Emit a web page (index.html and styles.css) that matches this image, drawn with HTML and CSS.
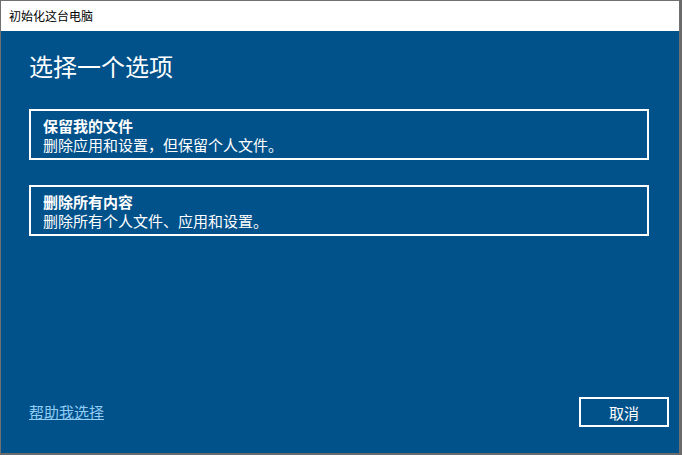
FILE: index.html
```html
<!DOCTYPE html>
<html lang="zh-CN">
<head>
<meta charset="utf-8">
<title>初始化这台电脑</title>
<link rel="stylesheet" href="styles.css">
</head>
<body>
<div class="window">
  <div class="titlebar">初始化这台电脑</div>
  <div class="content">
    <div class="main">
      <h1 class="heading">选择一个选项</h1>
      <div class="option">
        <div class="option-title">保留我的文件</div>
        <div class="option-desc">删除应用和设置，但保留个人文件。</div>
      </div>
      <div class="option option-second">
        <div class="option-title">删除所有内容</div>
        <div class="option-desc">删除所有个人文件、应用和设置。</div>
      </div>
    </div>
    <div class="footer">
      <a class="help" href="#">帮助我选择</a>
      <button class="cancel" type="button">取消</button>
    </div>
  </div>
</div>
</body>
</html>
```

FILE: styles.css
```css
html, body {
  margin: 0;
  padding: 0;
}
body {
  width: 682px;
  height: 455px;
  background: #6a6a6a;
  font-family: "Noto Sans CJK SC", "Noto Sans", sans-serif;
  overflow: hidden;
}
.window {
  width: 680px;
  height: 453px;
  box-sizing: border-box;
  border-top: 1px solid #707070;
  border-left: 1px solid #707070;
  border-right: 1px solid #707070;
  display: flex;
  flex-direction: column;
  background: #01518a;
}
.titlebar {
  height: 30px;
  line-height: 30px;
  background: #ffffff;
  color: #000000;
  font-size: 12px;
  padding-left: 8px;
}
.content {
  flex: 1;
  display: flex;
  flex-direction: column;
  color: #ffffff;
}
.main {
  flex: 1;
  padding: 19px 30px 0 28px;
}
.heading {
  margin: 0;
  font-size: 24px;
  line-height: 32px;
  font-weight: 400;
}
.option {
  margin-top: 27px;
  border: 2px solid #ffffff;
  padding: 5px 12px 4px;
  font-size: 15px;
  line-height: 19px;
}
.option-second {
  margin-top: 25px;
}
.option-title {
  font-weight: 700;
}
.footer {
  display: flex;
  align-items: center;
  justify-content: space-between;
  padding: 0 10px 26px 28px;
}
.help {
  color: #92cdf6;
  font-size: 15px;
  line-height: 20px;
  text-decoration: underline;
}
.cancel {
  width: 90px;
  height: 30px;
  box-sizing: border-box;
  border: 2px solid #ffffff;
  background: transparent;
  color: #ffffff;
  font-family: "Noto Sans CJK SC", "Noto Sans", sans-serif;
  font-size: 15px;
  padding: 0;
}
```
